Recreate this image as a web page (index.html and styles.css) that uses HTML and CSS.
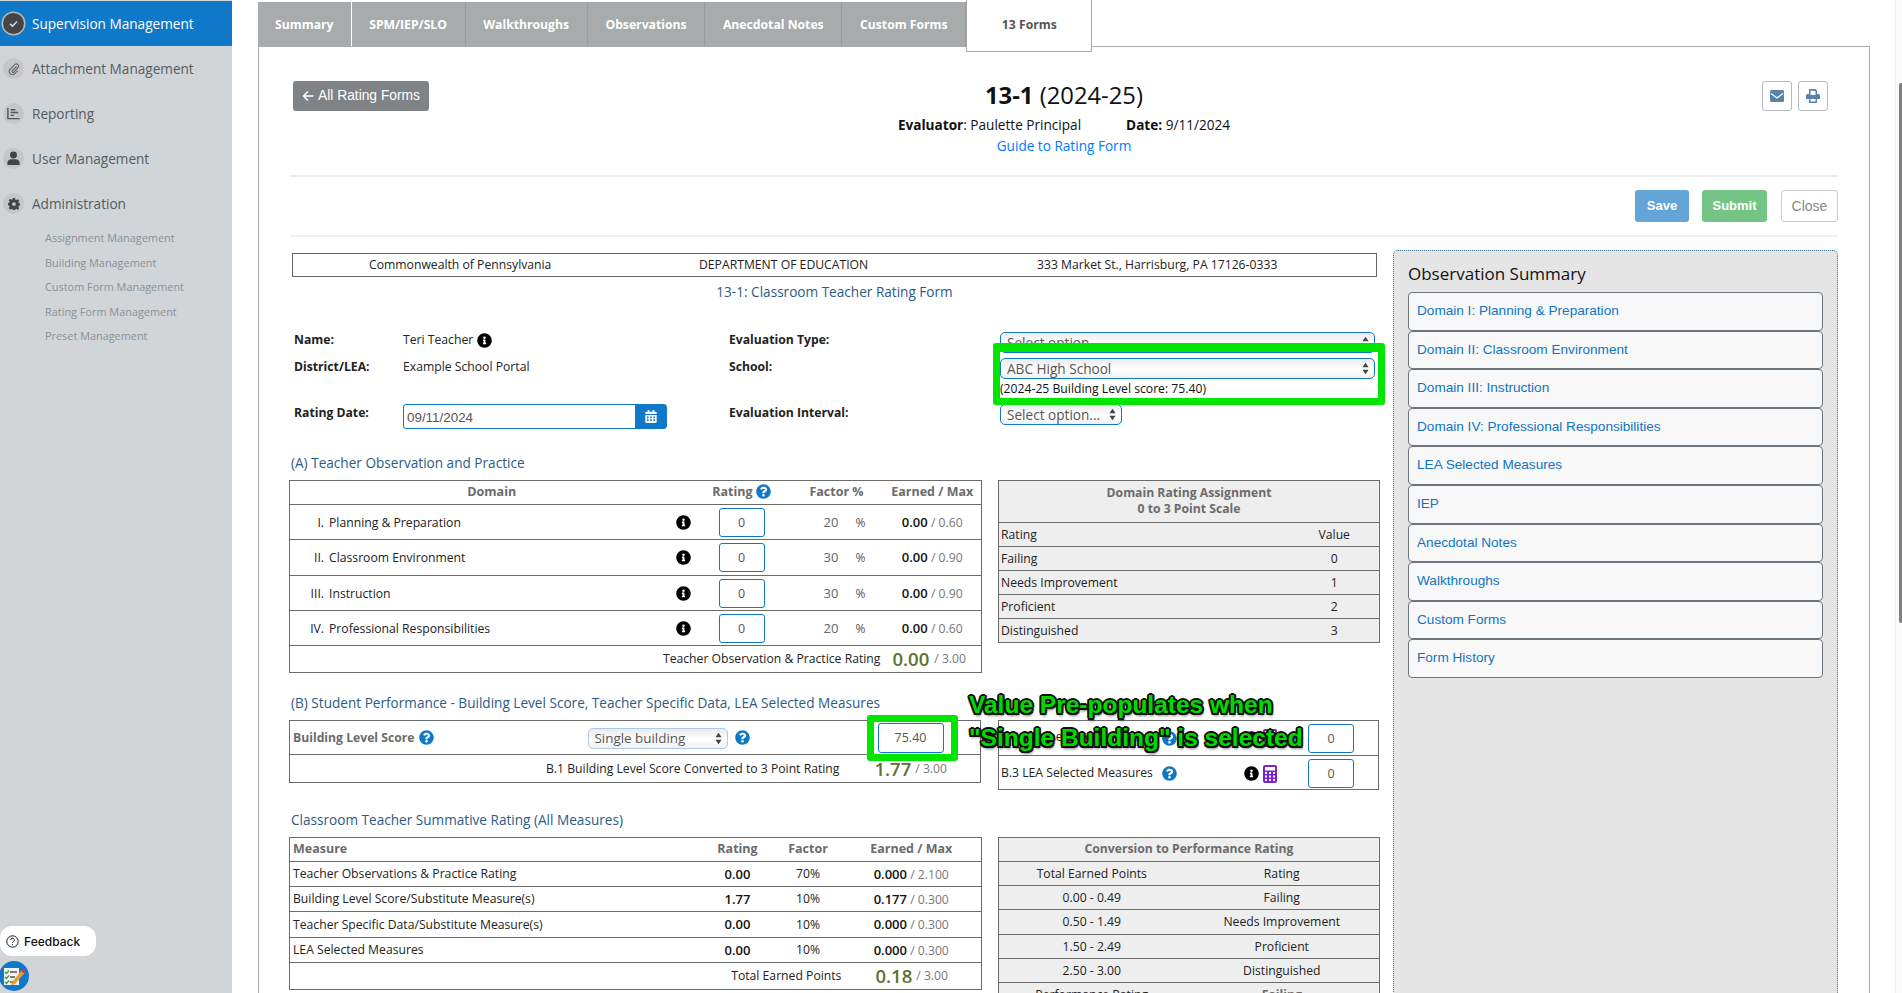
FILE: index.html
```html
<!DOCTYPE html>
<html lang="en">
<head>
<meta charset="utf-8">
<title>13-1 Rating Form</title>
<link rel="stylesheet" href="styles.css">
</head>
<body>
<svg class="defs" width="0" height="0" aria-hidden="true">
  <symbol id="i-info" viewBox="0 0 512 512"><path d="M256 8C119.043 8 8 119.083 8 256c0 136.997 111.043 248 248 248s248-111.003 248-248C504 119.083 392.957 8 256 8zm0 110c23.196 0 42 18.804 42 42s-18.804 42-42 42-42-18.804-42-42 18.804-42 42-42zm56 254c0 6.627-5.373 12-12 12h-88c-6.627 0-12-5.373-12-12v-24c0-6.627 5.373-12 12-12h12v-64h-12c-6.627 0-12-5.373-12-12v-24c0-6.627 5.373-12 12-12h64c6.627 0 12 5.373 12 12v100h12c6.627 0 12 5.373 12 12v24z"/></symbol>
  <symbol id="i-help" viewBox="0 0 512 512"><path d="M504 256c0 136.997-111.043 248-248 248S8 392.997 8 256C8 119.083 119.043 8 256 8s248 111.083 248 248zM262.655 90c-54.497 0-89.255 22.957-116.549 63.758-3.536 5.286-2.353 12.415 2.715 16.258l34.699 26.31c5.205 3.947 12.621 3.008 16.665-2.122 17.864-22.658 30.113-35.797 57.303-35.797 20.429 0 45.698 13.148 45.698 32.958 0 14.976-12.363 22.667-32.534 33.976C247.128 238.528 216 254.941 216 296v4c0 6.627 5.373 12 12 12h56c6.627 0 12-5.373 12-12v-1.333c0-28.462 83.186-29.647 83.186-106.667 0-58.002-60.165-102-116.531-102zM256 338c-25.365 0-46 20.635-46 46 0 25.364 20.635 46 46 46s46-20.636 46-46c0-25.365-20.635-46-46-46z"/></symbol>
  <symbol id="i-updown" viewBox="0 0 8 14"><path d="M4 0.5 7.5 5.5H0.5zM4 13.5 0.5 8.5H7.5z"/></symbol>
  <symbol id="i-calc" viewBox="0 0 14 18"><path fill-rule="evenodd" d="M2 0h10a2 2 0 0 1 2 2v14a2 2 0 0 1-2 2H2a2 2 0 0 1-2-2V2a2 2 0 0 1 2-2zM2 2v3.500h10V2zM2 7v2h2V7zM6 7v2h2V7zM10 7v2h2V7zM2 10.500v2h2v-2zM6 10.500v2h2v-2zM10 10.500v2h2v-2zM2 14v2h2v-2zM6 14v2h2v-2zM10 14v2h2v-2z"/></symbol>
</svg>

<aside class="sidebar">
  <nav class="nav">
    <a class="nav-item active"><span class="nav-ico dark"><svg viewBox="0 0 16 16" width="11" height="11"><path d="M3 8.500 6.500 12 13 5" fill="none" stroke="#ddd" stroke-width="2.200"/></svg></span>Supervision Management</a>
    <a class="nav-item"><span class="nav-ico"><svg viewBox="0 0 16 16" width="12" height="12"><path d="M11.500 4.500 5.500 10.500a1.500 1.500 0 0 0 2 2l6-6.500a3 3 0 0 0-4.200-4.200L3 8.300a4.200 4.200 0 0 0 6 6l4-4" fill="none" stroke="#666" stroke-width="1.500"/></svg></span>Attachment Management</a>
    <a class="nav-item"><span class="nav-ico"><svg viewBox="0 0 16 16" width="15" height="15"><path d="M2 2v11.500h12.500M5 4h5M5 7h8M5 10h3.500" fill="none" stroke="#555" stroke-width="1.500"/></svg></span>Reporting</a>
    <a class="nav-item"><span class="nav-ico"><svg viewBox="0 0 16 16" width="15" height="15"><circle cx="8" cy="4.200" r="3.700" fill="#444"/><path d="M1.500 15v-2.500c0-2.500 2-3.800 4-3.800h5c2 0 4 1.300 4 3.800V15z" fill="#444"/></svg></span>User Management</a>
    <a class="nav-item"><span class="nav-ico"><svg viewBox="0 0 16 16" width="12" height="12"><path fill-rule="evenodd" fill="#444" d="M6.600 0h2.800l.4 2.200 1.300.6 1.900-1.200 2 2-1.200 1.900.6 1.300 2.100.4v2.800l-2.100.4-.6 1.300 1.200 1.900-2 2-1.900-1.200-1.300.6-.4 2.200H6.600l-.4-2.200-1.300-.6-1.900 1.200-2-2 1.200-1.900-.6-1.300L-.5 9.400V6.600l2.100-.4.6-1.300L1 3l2-2 1.900 1.200 1.300-.6zM8 5.500a2.500 2.500 0 1 0 0 5 2.500 2.500 0 0 0 0-5z"/></svg></span>Administration</a>
  </nav>
  <ul class="subnav">
    <li>Assignment Management</li>
    <li>Building Management</li>
    <li>Custom Form Management</li>
    <li>Rating Form Management</li>
    <li>Preset Management</li>
  </ul>
  <div class="side-foot">
    <div class="feedback"><svg viewBox="0 0 16 16" width="13" height="13"><circle cx="8" cy="8" r="7" fill="none" stroke="#111" stroke-width="1.200"/><path d="M5.800 6.200a2.200 2.200 0 1 1 3.300 1.900c-.7.400-1.100.8-1.100 1.600" fill="none" stroke="#111" stroke-width="1.200"/><circle cx="8" cy="11.800" r=".8" fill="#111"/></svg><span>Feedback</span></div>
    <div class="tool-badge"><svg viewBox="0 0 30 30" width="30" height="30"><circle cx="14" cy="15" r="15" fill="#1078c8"/><rect x="4" y="7" width="15" height="17" fill="#f3f3f3"/><path d="M5 11l1.500 1.500L9 9.500M5 16l1.500 1.500L9 14.500M5 21l1.500 1.500L9 19.500" fill="none" stroke="#3a9a3a" stroke-width="1.200"/><path d="M10 11h7M10 16h5M10 21h5" stroke="#555" stroke-width="1.300"/><path d="M12 21 22 9l3 2.500L15 23l-4 1.500z" fill="#e0a030"/><path d="M21 10l1.800-2.200 3 2.500L24 12.500z" fill="#c23a6a"/></svg></div>
  </div>
</aside>

<main class="main">
  <div class="tabs">
    <a class="tab first">Summary</a>
    <a class="tab">SPM/IEP/SLO</a>
    <a class="tab">Walkthroughs</a>
    <a class="tab">Observations</a>
    <a class="tab">Anecdotal Notes</a>
    <a class="tab">Custom Forms</a>
    <a class="tab current">13 Forms</a>
  </div>

  <section class="panel">
    <header class="head">
      <div class="head-left">
        <a class="back"><svg viewBox="0 0 12 12" width="12" height="12"><path d="M6 1.500 1.500 6 6 10.500M2 6h9.500" fill="none" stroke="#fff" stroke-width="1.500"/></svg>All Rating Forms</a>
      </div>
      <div class="head-mid">
        <h1 class="title"><b>13-1</b> (2024-25)</h1>
        <p class="meta-line"><span><b>Evaluator</b>: Paulette Principal</span><span><b>Date:</b> 9/11/2024</span></p>
        <a class="guide">Guide to Rating Form</a>
      </div>
      <div class="head-right">
        <a class="icon-btn"><svg viewBox="0 0 14 14" width="14" height="14"><path fill="#5a82a8" d="M1.500 1h11A1.500 1.500 0 0 1 14 2.500v9a1.500 1.500 0 0 1-1.500 1.500h-11A1.500 1.500 0 0 1 0 11.500v-9A1.500 1.500 0 0 1 1.500 1z"/><path d="M1 4.500 7 9l6-4.500" fill="none" stroke="#fff" stroke-width="1.200"/></svg></a>
        <a class="icon-btn"><svg viewBox="0 0 14 14" width="14" height="14"><path fill="#5a82a8" fill-rule="evenodd" d="M3 0h6.500L11 1.500V5h1.500A1.500 1.500 0 0 1 14 6.500V10h-3v4H3v-4H0V6.500A1.500 1.500 0 0 1 1.500 5H3zM4.500 1.500V6h5V2zM4.500 10v2.500h5V10z"/></svg></a>
      </div>
    </header>
    <div class="actions">
      <a class="btn save">Save</a>
      <a class="btn submit">Submit</a>
      <a class="btn close">Close</a>
    </div>

    <div class="columns">
      <div class="form">
        <div class="state-box"><span>Commonwealth of Pennsylvania</span><span>DEPARTMENT OF EDUCATION</span><span>333 Market St., Harrisburg, PA 17126-0333</span></div>
        <h2 class="form-title">13-1: Classroom Teacher Rating Form</h2>

        <div class="meta-grid">
          <b class="lbl up">Name:</b>
          <div class="val up">Teri Teacher <svg class="ico14 black"><use href="#i-info"/></svg></div>
          <b class="lbl up">Evaluation Type:</b>
          <div class="sel wide"><span>Select option...</span><svg class="arrows"><use href="#i-updown"/></svg></div>

          <b class="lbl">District/LEA:</b>
          <div class="val">Example School Portal</div>
          <b class="lbl">School:</b>
          <div>
            <div class="sel wide"><span>ABC High School</span><svg class="arrows"><use href="#i-updown"/></svg></div>
            <div class="score-note">(2024-25 Building Level score: 75.40)</div>
          </div>

          <b class="lbl">Rating Date:</b>
          <div class="date"><span class="date-text">09/11/2024</span><span class="date-btn"><svg viewBox="0 0 14 16" width="12" height="13"><path fill="#fff" fill-rule="evenodd" d="M3 0h2v2h4V0h2v2h1.500A1.500 1.500 0 0 1 14 3.500V5H0V3.500A1.500 1.500 0 0 1 1.500 2H3zM0 6h14v8.500a1.500 1.500 0 0 1-1.500 1.500h-11A1.500 1.500 0 0 1 0 14.500zM2 8v2h2V8zM6 8v2h2V8zM10 8v2h2V8zM2 11.500v2h2v-2zM6 11.500v2h2v-2zM10 11.500v2h2v-2z"/></svg></span></div>
          <b class="lbl">Evaluation Interval:</b>
          <div class="sel narrow"><span>Select option...</span><svg class="arrows"><use href="#i-updown"/></svg></div>
        </div>

        <h3 class="sec">(A) Teacher Observation and Practice</h3>
        <div class="pair">
          <table class="tbl tbl-a">
            <colgroup><col class="a1"><col class="a2"><col class="a3"><col class="a4"></colgroup>
            <tr class="h24 th"><td class="c">Domain</td><td class="c">Rating <svg class="ico14 blue"><use href="#i-help"/></svg></td><td class="c">Factor %</td><td class="c">Earned / Max</td></tr>
            <tr class="h35"><td><div class="dom"><span class="num">I.</span><span class="dom-name">Planning &amp; Preparation</span><svg class="ico14 black"><use href="#i-info"/></svg></div></td><td class="c"><input class="num-in" value="0"></td><td><span class="fac">20</span><span class="pc">%</span></td><td class="c"><b class="dk">0.00</b> <span class="mut">/ 0.60</span></td></tr>
            <tr class="h36"><td><div class="dom"><span class="num">II.</span><span class="dom-name">Classroom Environment</span><svg class="ico14 black"><use href="#i-info"/></svg></div></td><td class="c"><input class="num-in" value="0"></td><td><span class="fac">30</span><span class="pc">%</span></td><td class="c"><b class="dk">0.00</b> <span class="mut">/ 0.90</span></td></tr>
            <tr class="h35"><td><div class="dom"><span class="num">III.</span><span class="dom-name">Instruction</span><svg class="ico14 black"><use href="#i-info"/></svg></div></td><td class="c"><input class="num-in" value="0"></td><td><span class="fac">30</span><span class="pc">%</span></td><td class="c"><b class="dk">0.00</b> <span class="mut">/ 0.90</span></td></tr>
            <tr class="h35"><td><div class="dom"><span class="num">IV.</span><span class="dom-name">Professional Responsibilities</span><svg class="ico14 black"><use href="#i-info"/></svg></div></td><td class="c"><input class="num-in" value="0"></td><td><span class="fac">20</span><span class="pc">%</span></td><td class="c"><b class="dk">0.00</b> <span class="mut">/ 0.60</span></td></tr>
            <tr class="h27"><td colspan="4"><div class="total t-a"><span>Teacher Observation &amp; Practice Rating</span><b class="big">0.00</b><span class="mut">/ 3.00</span></div></td></tr>
          </table>
          <table class="tbl tbl-grey tbl-scale">
            <colgroup><col class="s1"><col class="s2"></colgroup>
            <tr class="h42 th"><td class="c" colspan="2">Domain Rating Assignment<br>0 to 3 Point Scale</td></tr>
            <tr class="h24"><td>Rating</td><td class="c">Value</td></tr>
            <tr class="h24"><td>Failing</td><td class="c">0</td></tr>
            <tr class="h24"><td>Needs Improvement</td><td class="c">1</td></tr>
            <tr class="h24"><td>Proficient</td><td class="c">2</td></tr>
            <tr class="h24"><td>Distinguished</td><td class="c">3</td></tr>
          </table>
        </div>

        <h3 class="sec">(B) Student Performance - Building Level Score, Teacher Specific Data, LEA Selected Measures</h3>
        <div class="pair pair-b">
          <div class="box box-b">
            <div class="b-row b-top">
              <b class="th-t b-name">Building Level Score</b><svg class="ico14 blue"><use href="#i-help"/></svg>
              <div class="sel pale"><span>Single building</span><svg class="arrows"><use href="#i-updown"/></svg></div>
              <svg class="ico14 blue"><use href="#i-help"/></svg>
              <input class="num-in score" value="75.40">
            </div>
            <div class="total t-b"><span>B.1 Building Level Score Converted to 3 Point Rating</span><b class="big">1.77</b><span class="mut">/ 3.00</span></div>
          </div>
          <div class="box box-r">
            <div class="r-row r-first">
              <span class="r-name">B.2 Teacher Specific Data</span>
              <svg class="ico14 blue"><use href="#i-help"/></svg>
              <svg class="ico14 black r-info"><use href="#i-info"/></svg>
              <svg class="calc"><use href="#i-calc"/></svg>
              <input class="num-in r-in" value="0">
            </div>
            <div class="r-row">
              <span class="r-name">B.3 LEA Selected Measures</span>
              <svg class="ico14 blue"><use href="#i-help"/></svg>
              <svg class="ico14 black r-info"><use href="#i-info"/></svg>
              <svg class="calc"><use href="#i-calc"/></svg>
              <input class="num-in r-in" value="0">
            </div>
          </div>
        </div>

        <h3 class="sec">Classroom Teacher Summative Rating (All Measures)</h3>
        <div class="pair">
          <table class="tbl tbl-c">
            <colgroup><col class="m1"><col class="m2"><col class="m3"><col class="m4"></colgroup>
            <tr class="h24 th"><td>Measure</td><td class="c">Rating</td><td class="c">Factor</td><td class="c">Earned / Max</td></tr>
            <tr class="h25"><td>Teacher Observations &amp; Practice Rating</td><td class="c"><b class="dk">0.00</b></td><td class="c">70%</td><td class="c"><b class="dk">0.000</b> <span class="mut">/ 2.100</span></td></tr>
            <tr class="h25"><td>Building Level Score/Substitute Measure(s)</td><td class="c"><b class="dk">1.77</b></td><td class="c">10%</td><td class="c"><b class="dk">0.177</b> <span class="mut">/ 0.300</span></td></tr>
            <tr class="h26"><td>Teacher Specific Data/Substitute Measure(s)</td><td class="c"><b class="dk">0.00</b></td><td class="c">10%</td><td class="c"><b class="dk">0.000</b> <span class="mut">/ 0.300</span></td></tr>
            <tr class="h25"><td>LEA Selected Measures</td><td class="c"><b class="dk">0.00</b></td><td class="c">10%</td><td class="c"><b class="dk">0.000</b> <span class="mut">/ 0.300</span></td></tr>
            <tr class="h27"><td colspan="4"><div class="total t-c"><span>Total Earned Points</span><b class="big">0.18</b><span class="mut">/ 3.00</span></div></td></tr>
          </table>
          <table class="tbl tbl-grey tbl-conv">
            <colgroup><col class="k1"><col class="k2"></colgroup>
            <tr class="h24 th"><td class="c" colspan="2">Conversion to Performance Rating</td></tr>
            <tr class="h24"><td class="c">Total Earned Points</td><td class="c">Rating</td></tr>
            <tr class="h24"><td class="c">0.00 - 0.49</td><td class="c">Failing</td></tr>
            <tr class="h25"><td class="c">0.50 - 1.49</td><td class="c">Needs Improvement</td></tr>
            <tr class="h24"><td class="c">1.50 - 2.49</td><td class="c">Proficient</td></tr>
            <tr class="h24"><td class="c">2.50 - 3.00</td><td class="c">Distinguished</td></tr>
            <tr class="h24"><td class="c">Performance Rating</td><td class="c"><b class="th-t">Failing</b></td></tr>
          </table>
        </div>
      </div>

      <aside class="summary">
        <h2 class="sum-title">Observation Summary</h2>
        <ul class="sum-list">
          <li>Domain I: Planning &amp; Preparation</li>
          <li>Domain II: Classroom Environment</li>
          <li>Domain III: Instruction</li>
          <li>Domain IV: Professional Responsibilities</li>
          <li>LEA Selected Measures</li>
          <li>IEP</li>
          <li>Anecdotal Notes</li>
          <li>Walkthroughs</li>
          <li>Custom Forms</li>
          <li>Form History</li>
        </ul>
      </aside>
    </div>
  </section>
</main>

<div class="scrolltrack"><div class="scrollthumb"></div></div>

<div class="mark mark-school"></div>
<div class="mark mark-score"></div>
<div class="callout">Value Pre-populates when<br>"Single Building" is selected</div>
</body>
</html>
```

FILE: styles.css
```css
* { box-sizing: border-box; }
html, body { margin: 0; height: 993px; overflow: hidden; }
body {
  display: flex;
  position: relative;
  background: #fff;
  color: #222;
  font: 12.200px/18px "Open Sans", "Liberation Sans", sans-serif;
}
.defs { position: absolute; }
h1, h2, h3, p, ul { margin: 0; padding: 0; font-weight: 400; }
ul { list-style: none; }

/* sidebar */
.sidebar { width: 232px; flex: none; background: #d1d5d8; display: flex; flex-direction: column; height: 993px; padding-top: 1px; }
.nav-item { display: flex; align-items: center; height: 45px; padding-left: 3px; gap: 8px; font-size: 13.600px; color: #555b60; }
.nav-item.active { background: #1078c8; color: #fff; font-weight: 500; }
.nav-ico { width: 21px; height: 21px; border-radius: 50%; background: #c4c6c8; display: flex; align-items: center; justify-content: center; flex: none; }
.nav-ico.dark { background: #454545; box-shadow: 0 0 0 1.500px #b5b8ba; }
.subnav { padding: 0 0 0 45px; font-size: 10.900px; color: #8b9196; }
.subnav li { height: 24.500px; line-height: 24px; }
.side-foot { margin-top: auto; padding-bottom: 2px; }
.feedback { width: 96px; height: 30px; background: #fff; border-radius: 12px; display: flex; align-items: center; gap: 5px; padding-left: 6px; font: 500 12px "Inter", "Liberation Sans", sans-serif; color: #111; }
.tool-badge { height: 30px; margin-top: 5px; display: block; }
.tool-badge svg { display: block; }

/* main */
.main { flex: 1; min-width: 0; padding-left: 26px; }
.tabs { display: flex; align-items: flex-start; height: 46px; position: relative; z-index: 2; }
.tab { height: 44px; margin-top: 2px; padding: 1px 17.700px 0; line-height: 44px; background: #a7abac; color: #fff; font-size: 12.200px; font-weight: 700; border-right: 1px solid #999d9e; white-space: nowrap; }
.tab.first { border-right-color: #fff; padding: 1px 17px 0 17px; }
.tab.current { width: 126px; height: 53px; margin-top: -1px; padding: 3px 0 0; text-align: center; background: #fff; color: #555; border: 1px solid #aaa; }
.panel { margin-right: 25px; height: 960px; border: 1px solid #aaa; border-bottom: 0; padding: 0 31px 0 30px; }

.head { display: grid; grid-template-columns: 1fr auto 1fr; height: 130px; margin-left: 1px; border-bottom: 2px solid #eee; padding-top: 34px; }
.head-left { padding-left: 3px; }
.back { display: inline-flex; align-items: center; gap: 4px; width: 136px; height: 30px; padding: 0 0 1px 9px; border-radius: 3px; background: #7f8385; color: #fff; font: 13.800px/28px "Liberation Sans", sans-serif; }
.head-mid { text-align: center; margin-top: -1px; }
.title { font-size: 23.800px; line-height: 30px; color: #111; }
.title b { font-weight: 700; }
.meta-line { display: flex; justify-content: center; gap: 45px; font-size: 13.600px; line-height: 20px; margin-top: 5px; color: #111; }
.guide { display: block; font-size: 13.600px; line-height: 20px; color: #007bff; margin-top: 1px; }
.head-right { display: flex; justify-content: flex-end; gap: 6px; padding-right: 10px; }
.icon-btn { width: 30px; height: 30px; border: 1px solid #b5b9bd; border-radius: 3px; display: flex; align-items: center; justify-content: center; }

.actions { display: flex; justify-content: flex-end; align-items: flex-start; height: 60px; margin-left: 1px; padding-top: 13px; border-bottom: 2px solid #eee; }
.btn { height: 32px; border-radius: 3px; text-align: center; font: 700 13px/31px "Liberation Sans", sans-serif; color: #fff; }
.save { width: 54px; background: #63a4d9; margin-right: 13px; }
.submit { width: 65px; background: #74c486; margin-right: 14px; }
.close { width: 57px; background: #fff; border: 1px solid #ccc; color: #888; font: 14px/30px "Liberation Sans", sans-serif; }

.columns { display: grid; grid-template-columns: 1092px 445px; column-gap: 12px; padding-top: 13px; }

/* form */
.state-box { display: grid; grid-template-columns: 330px 338px 1fr; height: 24px; margin: 3px 0 0 3px; width: 1085px; padding-left: 76px; border: 1px solid #666; line-height: 21px; color: #222; }
.form-title { font-size: 13.600px; line-height: 20px; margin: 5px 0 0 3px; width: 1085px; text-align: center; color: #2c5a85; }
.meta-grid { display: grid; grid-template-columns: 109px 326px 271px 378px; grid-template-rows: 26px 46px 25px; margin: 30px 0 0 5px; color: #222; }
.lbl { font-weight: 700; color: #222; }
.up { margin-top: -1px; }
.val { display: flex; align-items: flex-start; gap: 4px; }
.val .ico14 { margin-top: 2px; }
.ico14 { width: 15px; height: 15px; flex: none; display: inline-block; vertical-align: -3px; }
.black { fill: #000; }
.blue { fill: #1078c8; }
.sel { display: flex; align-items: center; justify-content: space-between; height: 21px; padding: 0 5px 0 6px; border: 1px solid #1078c8; border-radius: 5px; background: linear-gradient(#ebebeb, #fff 55%, #f0f0f0); color: #555; font-size: 13.600px; line-height: 19px; }
.sel.wide { width: 375px; }
.sel.narrow { width: 122px; }
.arrows { width: 7px; height: 13px; fill: #444; flex: none; }
.score-note { font-size: 12.200px; line-height: 17px; margin-top: 1px; color: #111; }
.date { display: flex; width: 264px; height: 25px; border: 1px solid #1078c8; border-radius: 3px; }
.date-text { flex: 1; padding-left: 3px; font: 13.400px/26px "Liberation Sans", sans-serif; color: #555; }
.date-btn { width: 31px; background: #1078c8; display: flex; align-items: center; justify-content: center; }

.sec { font-size: 13.600px; line-height: 20px; margin: 20px 0 7px 2px; color: #2c5a85; }
.meta-grid + .sec { margin-top: 24px; }
.pair { display: grid; grid-template-columns: 692px 381px; column-gap: 17px; align-items: start; }
.pair-b { height: 70px; }

.tbl { border-collapse: collapse; table-layout: fixed; width: 100%; border: 1px solid #6b6b6b; line-height: 16px; }
.tbl td { border-top: 1px solid #6b6b6b; border-bottom: 1px solid #6b6b6b; padding: 0 3px; vertical-align: middle; }
.tbl-grey td { padding: 0 2px; }
.tbl-scale td { padding-top: 1px; }
.tbl .c { text-align: center; }
.th td, .th-t { color: #6b6b6b; font-weight: 700; }
.tbl-a .th td, .tbl-c .th td { font-size: 12.500px; }
.tbl .th td { padding-top: 0; padding-bottom: 1px; }
.h24 { height: 24px; } .h25 { height: 25px; } .h26 { height: 26px; } .h27 { height: 27px; }
.h35 { height: 35px; } .h36 { height: 36px; } .h42 { height: 42px; }
.a1 { width: 404px; } .a2 { width: 96px; } .a3 { width: 94px; } .a4 { width: 98px; }
.s1 { width: 291px; } .s2 { width: 90px; }
.m1 { width: 411px; } .m2 { width: 74px; } .m3 { width: 67px; } .m4 { width: 140px; }
.k1 { width: 186px; } .k2 { width: 195px; }
.tbl-grey { background: #eee; }

.dom { display: flex; align-items: center; }
.num { width: 31px; text-align: right; margin-right: 5px; padding-top: 1px; flex: none; }
.dom-name { flex: 1; padding-top: 1px; }
.dom .ico14 { margin-right: 0; }
.num-in { width: 46px; height: 29px; border: 1px solid #1078c8; border-radius: 3px; background: #fff; text-align: center; color: #555; font: 12.500px "Open Sans", sans-serif; padding: 0; display: inline-block; vertical-align: middle; }
.fac { display: inline-block; margin-left: 31px; width: 32px; color: #666; font-size: 13px; }
.pc { color: #555; font-size: 12px; }
.dk { color: #111; font-weight: 600; font-size: 13px; }
.mut { color: #777; font-size: 12.200px; }
.total { display: flex; justify-content: flex-end; align-items: center; }
.big { color: #5b7332; font-size: 18.500px; font-weight: 600; margin: 0 5px 0 12px; }
.t-a { padding-right: 12px; }
.t-c { padding-right: 30px; }
.t-c .big { margin: 0 4px 0 34px; }

.box { border: 1px solid #6b6b6b; }
.box-b { height: 63px; }
.b-row { height: 34px; display: flex; align-items: center; border-bottom: 1px solid #6b6b6b; padding-left: 3px; }
.b-name { margin-right: 4px; }
.sel.pale { width: 140px; margin: 2px 7px 0 154px; border-color: #a9cbe8; font-size: 13.400px; }
.score { width: 66px; height: 30px; margin: 0 0 0 128px; }
.t-b { height: 28px; padding-right: 33px; }
.t-b .big { margin: 0 4px 0 35px; }
.box-r { height: 70px; }
.r-row { height: 35px; display: flex; align-items: center; padding-left: 2px; }
.r-first { border-bottom: 1px solid #6b6b6b; }
.r-name { width: 161px; color: #222; flex: none; padding-bottom: 2px; }
.r-info { margin-left: 67px; }
.calc { width: 14px; height: 18px; fill: #7a22cc; margin-left: 4px; flex: none; }
.r-in { margin-left: 31px; }

/* summary */
.summary { background: #e5e5e5; border: 1px dotted #3f72a0; border-radius: 5px; padding: 12px 14px 0; height: 760px; }
.sum-title { font-size: 17px; line-height: 22px; color: #111; height: 29px; }
.sum-list li { height: 38.600px; padding: 0 8px; background: #f8f8f8; border: 1px solid #6c757d; border-radius: 4px; font: 13.600px/35px "Liberation Sans", sans-serif; color: #0f75c3; }

/* scrollbar */
.scrolltrack { width: 7px; height: 993px; flex: none; background: #fafafa; border-left: 1px solid #f0f0f0; padding: 83px 0 0 3px; }
.scrollthumb { width: 3px; height: 540px; background: #808080; border-radius: 2px 0 0 2px; }

/* annotations drawn on top of the screenshot */
.mark { position: absolute; z-index: 5; border: 7px solid #00e600; border-top-width: 9px; border-radius: 3px; }
.mark-school { left: 993px; top: 343px; width: 392px; height: 62px; }
.mark-score { left: 867px; top: 715px; width: 91px; height: 46px; border-top-width: 7px; }
.callout {
  position: absolute; z-index: 6; left: 969px; top: 688px;
  font: 700 24.500px/33px "Liberation Sans", sans-serif;
  color: #00d900; white-space: nowrap;
  text-shadow:
    -2px 0 0 #111, 2px 0 0 #111, 0 -2px 0 #111, 0 2px 0 #111,
    -1.500px -1.500px 0 #111, 1.500px -1.500px 0 #111, -1.500px 1.500px 0 #111, 1.500px 1.500px 0 #111,
    1px 3px 3px rgba(0,0,0,.55);
}
```
